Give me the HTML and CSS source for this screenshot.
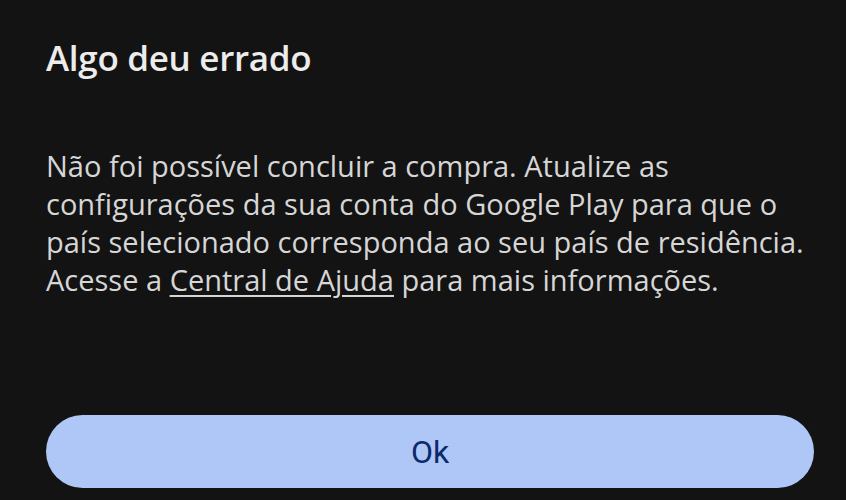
FILE: index.html
```html
<!DOCTYPE html>
<html lang="pt-BR">
<head>
  <meta charset="UTF-8">
  <title>Algo deu errado</title>
  <meta name="viewport" content="width=device-width, initial-scale=1.0">
  <link rel="stylesheet" href="styles.css">
</head>
<body>
  <div class="dialog">
    <h2 class="title">Algo deu errado</h2>
    <p class="message">
      Não foi possível concluir a compra. Atualize as configurações da sua conta do Google Play para que o país selecionado corresponda ao seu país de residência. Acesse a <a href="#" class="link">Central de Ajuda</a> para mais informações.
    </p>
    <button class="ok" type="button">Ok</button>
  </div>
</body>
</html>
```

FILE: styles.css
```css
html, body { margin: 0; height: 100%; background: #131313; }
body { font-family: "Open Sans", Roboto, sans-serif; color: #d6d6d6; overflow: hidden; }
.dialog { padding: 34px 32px 0 46px; display: flex; flex-direction: column; }
.title { margin: 0; font-size: 35px; font-weight: 600; line-height: 48px; color: #ececec; letter-spacing: -0.3px; }
.message { margin: 65px 0 0; font-size: 29px; line-height: 38px; }
.link { color: #d6d6d6; text-decoration: underline; text-underline-offset: 4px; text-decoration-thickness: 2px; }
.ok { margin-top: 116px; height: 73px; border: none; border-radius: 37px; background: #aec7f6; color: #0c2a6a; font-family: Roboto, sans-serif; font-size: 32px; cursor: pointer; }
```
